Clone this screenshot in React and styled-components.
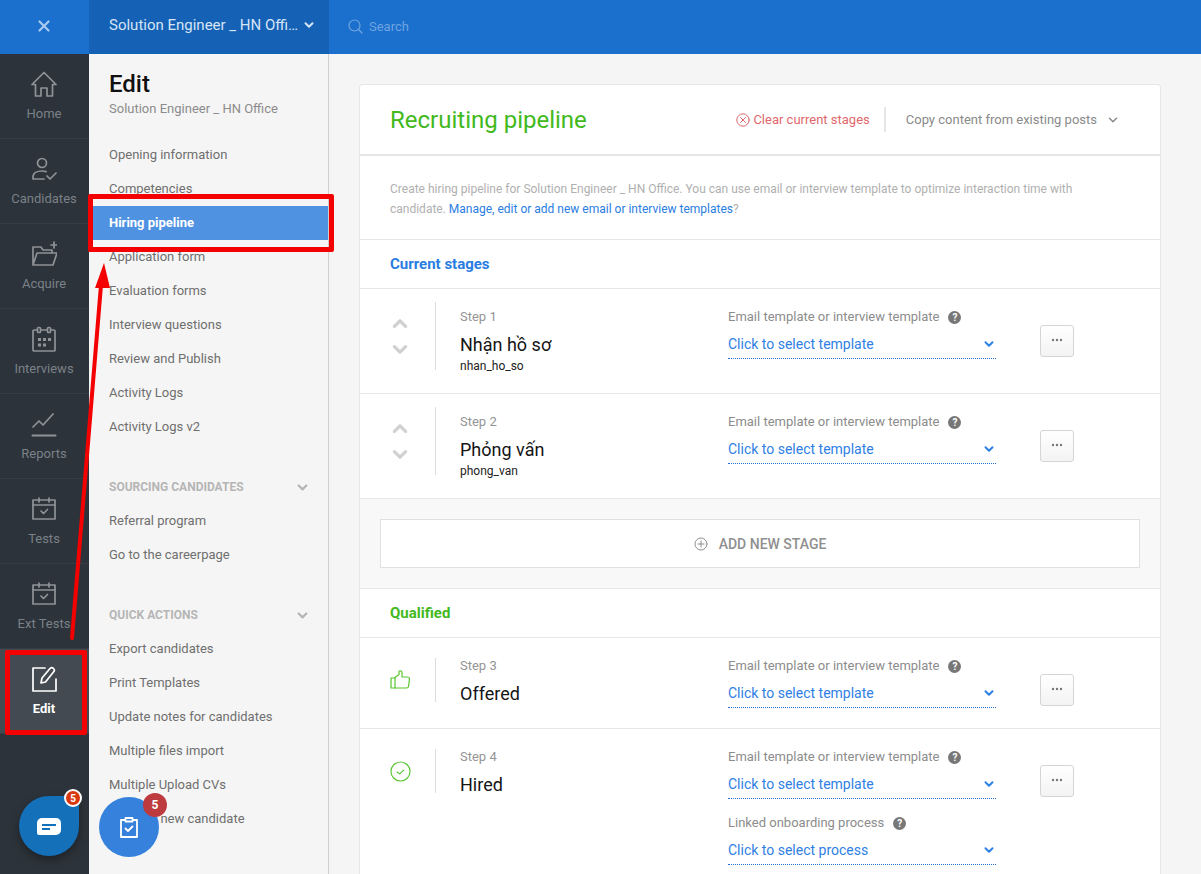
import React from 'react';
import styled, { createGlobalStyle } from 'styled-components';

const GlobalStyle = createGlobalStyle`
  html, body { margin: 0; padding: 0; height: 100%; overflow: hidden; }
  body { font-family: Roboto, "Liberation Sans", sans-serif; background: #f5f5f5; }
  * { box-sizing: border-box; }
`;

const Page = styled.div`
  position: relative;
  width: 1201px;
  height: 874px;
  overflow: hidden;
  display: flex;
  flex-direction: column;
`;

const TopBar = styled.header`
  height: 54px;
  flex: none;
  display: flex;
  background: #1b6fcd;
`;

const CloseBox = styled.div`
  width: 89px;
  padding: 0 1px 2px 0;
  display: flex;
  align-items: center;
  justify-content: center;
  color: #a9cbf0;
`;

const JobPicker = styled.div`
  width: 240px;
  background: #1561b5;
  display: flex;
  align-items: center;
  gap: 5px;
  padding: 0 15px 4px 20px;
  color: #d5e5f7;
  font-size: 15px;
  white-space: nowrap;
`;

const JobName = styled.span`
  flex: 1;
  overflow: hidden;
  text-overflow: ellipsis;
`;

const SearchBox = styled.div`
  display: flex;
  align-items: center;
  gap: 6px;
  padding: 0 0 2px 19px;
  font-size: 13px;
  color: #6fa5e0;
`;

const Body = styled.div`
  flex: 1;
  min-height: 0;
  display: flex;
`;

const Rail = styled.nav`
  width: 89px;
  flex: none;
  background: #2c333a;
`;

const RailItem = styled.div`
  height: 85px;
  padding: 17px 1px 0 0;
  display: flex;
  flex-direction: column;
  align-items: center;
  gap: 9px;
  font-size: 13px;
  line-height: 15px;
  font-weight: ${p => (p.$active ? 700 : 400)};
  color: ${p => (p.$active ? '#fff' : '#7b8188')};
  background: ${p => (p.$active ? '#434a52' : 'transparent')};
  border-bottom: 1px solid #363d44;
  svg { color: ${p => (p.$active ? '#fff' : '#8f9397')}; }
`;

const Sidebar = styled.aside`
  width: 240px;
  flex: none;
  background: #f5f5f5;
  border-right: 1px solid #cfcfcf;
  padding-top: 16px;
`;

const SideTitle = styled.h1`
  margin: 0;
  padding-left: 20px;
  font-size: 24px;
  line-height: 28px;
  font-weight: 500;
  color: #111;
`;

const SideSub = styled.div`
  padding-left: 20px;
  margin: 2px 0 20px;
  font-size: 13px;
  line-height: 18px;
  color: #8c8c8c;
`;

const SideItem = styled.div`
  height: 34px;
  line-height: 34px;
  padding-left: 20px;
  font-size: 13px;
  white-space: nowrap;
  font-weight: ${p => (p.$active ? 700 : 400)};
  color: ${p => (p.$active ? '#fff' : '#6f6f6f')};
  background: ${p => (p.$active ? '#4f92e1' : 'transparent')};
`;

const SideHead = styled.div`
  height: 34px;
  margin-top: ${p => p.$gap}px;
  padding: 0 20px 0 20px;
  display: flex;
  align-items: center;
  justify-content: space-between;
  font-size: 12px;
  font-weight: 700;
  color: #b5b5b5;
`;

const Main = styled.main`
  flex: 1;
  min-width: 0;
  padding: 30px 40px 0 30px;
`;

const Card = styled.section`
  background: #fff;
  border: 1px solid #e6e6e6;
  border-radius: 3px 3px 0 0;
`;

const CardHead = styled.div`
  height: 71px;
  display: flex;
  align-items: center;
  padding: 0 42px 0 30px;
  border-bottom: 2px solid #e6e6e6;
`;

const CardTitle = styled.h2`
  flex: 1;
  margin: 0;
  font-size: 24px;
  font-weight: 400;
  color: #42b91c;
`;

const ClearLink = styled.div`
  display: flex;
  align-items: center;
  gap: 3px;
  padding-right: 14px;
  height: 25px;
  font-size: 13px;
  color: #e0686c;
  border-right: 2px solid #e6e6e6;
`;

const CopyLink = styled.div`
  display: flex;
  align-items: center;
  gap: 11px;
  padding-left: 20px;
  font-size: 13px;
  color: #8a8a8a;
`;

const Intro = styled.p`
  margin: 0;
  height: 84px;
  padding: 23px 30px 0;
  font-size: 12px;
  line-height: 20px;
  color: #b0b0b0;
  border-bottom: 1px solid #e6e6e6;
  a { color: #2a7de1; }
`;

const SectionHead = styled.h3`
  margin: 0;
  height: 49px;
  padding-left: 30px;
  display: flex;
  align-items: center;
  font-size: 15px;
  font-weight: 700;
  color: ${p => p.$color};
  border-bottom: 1px solid #e6e6e6;
`;

const StageRow = styled.div`
  display: flex;
  padding-top: 14px;
  padding-bottom: ${p => p.$bottom}px;
  border-bottom: 1px solid #e6e6e6;
`;

const StageIcon = styled.div`
  width: 76px;
  height: ${p => (p.$code ? '68px' : '44px')};
  margin-top: ${p => (p.$code ? '-1px' : '6px')};
  padding-left: 5px;
  flex: none;
  border-right: 1px solid #dcdcdc;
  display: flex;
  flex-direction: column;
  align-items: center;
  justify-content: center;
  gap: 9px;
  color: ${p => p.$color};
`;

const StageInfo = styled.div`
  width: 292px;
  padding-left: 24px;
  flex: none;
`;

const StepLabel = styled.div`
  font-size: 13px;
  line-height: 18px;
  margin-top: 5px;
  color: #949494;
`;

const StageName = styled.div`
  margin-top: 7px;
  font-size: 18px;
  line-height: 24px;
  color: #151515;
`;

const StageCode = styled.div`
  margin-top: 1px;
  font-size: 12px;
  line-height: 16px;
  color: #222;
`;

const TemplateCol = styled.div`
  width: 268px;
  flex: none;
`;

const FieldLabel = styled.div`
  display: flex;
  align-items: center;
  gap: 9px;
  margin-top: ${p => p.$gap || 5}px;
  font-size: 13px;
  line-height: 18px;
  color: #8c8c8c;
`;

const HelpDot = styled.span`
  width: 13px;
  height: 13px;
  border-radius: 50%;
  background: #777;
  color: #fff;
  font-size: 10px;
  font-weight: 700;
  line-height: 13px;
  text-align: center;
`;

const SelectLine = styled.div`
  height: 30px;
  margin-top: 3px;
  display: flex;
  align-items: center;
  justify-content: space-between;
  padding-right: 2px;
  font-size: 14px;
  color: #2f80e4;
  border-bottom: 1px dotted #2270d0;
`;

const DotsButton = styled.div`
  width: 34px;
  height: 32px;
  margin: 22px 0 0 44px;
  border: 1px solid #d5d5d5;
  border-radius: 3px;
  background: linear-gradient(#fff, #f3f3f3);
  display: flex;
  align-items: center;
  justify-content: center;
  padding-bottom: 3px;
  color: #777;
`;

const AddArea = styled.div`
  height: 90px;
  padding: 20px;
  background: #f8f8f8;
  border-bottom: 1px solid #e6e6e6;
`;

const AddButton = styled.div`
  height: 49px;
  background: #fff;
  border: 1px solid #e0e0e0;
  display: flex;
  align-items: center;
  justify-content: center;
  gap: 11px;
  font-size: 14px;
  font-weight: 500;
  color: #8f8f8f;
  svg { color: #8f8f8f; }
`;

const ChatFab = styled.div`
  position: absolute;
  left: 19px;
  top: 796px;
  width: 60px;
  height: 60px;
  border-radius: 50% 0 50% 50%;
  background: #1470b8;
  box-shadow: 0 4px 10px rgba(0, 0, 0, 0.35);
  display: flex;
  align-items: center;
  justify-content: center;
`;

const TaskFab = styled.div`
  position: absolute;
  left: 99px;
  top: 797px;
  width: 60px;
  height: 60px;
  border-radius: 50%;
  background: #3681dc;
  display: flex;
  align-items: center;
  justify-content: center;
`;

const ChatBadge = styled.span`
  position: absolute;
  left: 45px;
  top: -7px;
  width: 18px;
  height: 18px;
  display: flex;
  align-items: center;
  justify-content: center;
  border-radius: 50%;
  border: 2px solid #fff;
  background: #d9380f;
  color: #fff;
  font-size: 10px;
  font-weight: 700;
`;

const TaskBadge = styled.span`
  position: absolute;
  left: 44px;
  top: -4px;
  width: 24px;
  height: 24px;
  display: flex;
  align-items: center;
  justify-content: center;
  border-radius: 50%;
  background: #bd3a3e;
  color: #fff;
  font-size: 12px;
  font-weight: 700;
`;

const MarkBox = styled.div`
  position: absolute;
  border: 5px solid #f40000;
  border-radius: 2px;
  left: ${p => p.$x}px;
  top: ${p => p.$y}px;
  width: ${p => p.$w}px;
  height: ${p => p.$h}px;
`;

const ArrowLayer = styled.svg`
  position: absolute;
  left: 0;
  top: 0;
  width: 1201px;
  height: 874px;
  pointer-events: none;
`;

const Line = ({ size = 24, children, sw = 1.6, vb = 24 }) => (
  <svg width={size} height={size} viewBox={`0 0 ${vb} ${vb}`} fill="none" stroke="currentColor" strokeWidth={sw} strokeLinecap="round" strokeLinejoin="round">
    {children}
  </svg>
);

const Chevron = ({ size = 10, sw = 2 }) => (
  <Line size={size} vb={10} sw={sw}><path d="M1.5 3.2 5 6.7l3.5-3.5" /></Line>
);

const railIcons = {
  home: <path d="M1 13.500 13 1.500l12 12h-3.500V25H16v-8h-6v8H4.500V13.500H1z" />,
  candidates: (
    <>
      <circle cx="11" cy="7" r="4.500" />
      <path d="M2 23v-2c0-4 4-6 9-6 1.500 0 3 .2 4 .6M2 23h11M16 20l3 3 6-6" />
    </>
  ),
  acquire: (
    <>
      <path d="M2 24V6h8l2 3h9v3M2 24l4-12h20l-4 12H2z" />
      <path d="M23 1v6M20 4h6" />
    </>
  ),
  interviews: (
    <>
      <rect x="2" y="4" width="22" height="21" rx="1" />
      <rect x="6.500" y="1.500" width="3" height="5" rx="1" fill="#2c333a" />
      <rect x="16.500" y="1.500" width="3" height="5" rx="1" fill="#2c333a" />
      <path d="M7 12h3v3H7zM12 12h3v3h-3zM17 12h3v3h-3zM7 17.500h3v3H7zM12 17.500h3v3h-3z" fill="currentColor" stroke="none" />
    </>
  ),
  reports: (
    <>
      <path d="M2 16l6-6 4 4 10-11" />
      <path d="M1.500 24.500h23" strokeWidth="2" />
    </>
  ),
  tests: (
    <>
      <rect x="2" y="4" width="22" height="19" />
      <path d="M2 9h22M8 2v4M18 2v4M10 15l2.500 2.500 4-4" />
    </>
  ),
  edit: (
    <>
      <path d="M14 2H2v23h23V13" />
      <path d="M10 17l1-5L19 2.500a2 2 0 0 1 3.500 3.500L14.500 16l-4.500 1z" />
    </>
  ),
};

const railItems = [
  { label: 'Home', icon: 'home' },
  { label: 'Candidates', icon: 'candidates' },
  { label: 'Acquire', icon: 'acquire' },
  { label: 'Interviews', icon: 'interviews' },
  { label: 'Reports', icon: 'reports' },
  { label: 'Tests', icon: 'tests' },
  { label: 'Ext Tests', icon: 'tests' },
  { label: 'Edit', icon: 'edit', active: true },
];

const Stage = ({ step, name, code, icon, iconColor = '#57c52f', bottom = 20, children }) => (
  <StageRow $bottom={bottom}>
    <StageIcon $code={!!code} $color={iconColor}>{icon}</StageIcon>
    <StageInfo>
      <StepLabel>{step}</StepLabel>
      <StageName>{name}</StageName>
      {code && <StageCode>{code}</StageCode>}
    </StageInfo>
    <TemplateCol>
      <FieldLabel>Email template or interview template <HelpDot>?</HelpDot></FieldLabel>
      <SelectLine>Click to select template <Chevron /></SelectLine>
      {children}
    </TemplateCol>
    <DotsButton>
      <svg width="12" height="4" viewBox="0 0 12 4" fill="currentColor">
        <circle cx="2" cy="2" r="1.200" />
        <circle cx="6" cy="2" r="1.200" />
        <circle cx="10" cy="2" r="1.200" />
      </svg>
    </DotsButton>
  </StageRow>
);

const MoveArrows = (
  <>
    <Line size={16} sw={2} vb={10}><path d="M1.500 6.500 5 3l3.500 3.500" /></Line>
    <Line size={16} sw={2} vb={10}><path d="M1.500 3.500 5 7l3.500-3.500" /></Line>
  </>
);

const ThumbIcon = (
  <Line size={20} vb={20} sw={1.2}>
    <path d="M5 8H1v10h4" />
    <path d="M5 7.500l4-3V1.800c0-1.300 3-1.300 3 .6V7h5.500c1.500 0 2 1 2 2l-1 7.500c-.2 1-1 1.500-2 1.500H5V7.500z" />
  </Line>
);

const CheckIcon = (
  <Line size={21} vb={22} sw={1.2}>
    <circle cx="11" cy="11" r="10" />
    <path d="M7.500 11.500 10 13.500l4.500-4" />
  </Line>
);

export default function App() {
  return (
    <Page>
      <GlobalStyle />
      <TopBar>
        <CloseBox>
          <Line size={14} sw={2.2} vb={14}><path d="M2.500 2.500l9 9M11.500 2.500l-9 9" /></Line>
        </CloseBox>
        <JobPicker>
          <JobName>Solution Engineer _ HN Office</JobName>
          <Chevron />
        </JobPicker>
        <SearchBox>
          <Line size={15} sw={1.2} vb={15}><circle cx="6.500" cy="6.500" r="5.500" /><path d="M10.500 10.500 14 14" /></Line>
          Search
        </SearchBox>
      </TopBar>
      <Body>
        <Rail>
          {railItems.map(it => (
            <RailItem key={it.label} $active={it.active}>
              <Line size={26} vb={26} sw={1.7}>{railIcons[it.icon]}</Line>
              {it.label}
            </RailItem>
          ))}
        </Rail>
        <Sidebar>
          <SideTitle>Edit</SideTitle>
          <SideSub>Solution Engineer _ HN Office</SideSub>
          <SideItem>Opening information</SideItem>
          <SideItem>Competencies</SideItem>
          <SideItem $active>Hiring pipeline</SideItem>
          <SideItem>Application form</SideItem>
          <SideItem>Evaluation forms</SideItem>
          <SideItem>Interview questions</SideItem>
          <SideItem>Review and Publish</SideItem>
          <SideItem>Activity Logs</SideItem>
          <SideItem>Activity Logs v2</SideItem>
          <SideHead $gap={26}>SOURCING CANDIDATES <Chevron size={11} /></SideHead>
          <SideItem>Referral program</SideItem>
          <SideItem>Go to the careerpage</SideItem>
          <SideHead $gap={26}>QUICK ACTIONS <Chevron size={11} /></SideHead>
          <SideItem>Export candidates</SideItem>
          <SideItem>Print Templates</SideItem>
          <SideItem>Update notes for candidates</SideItem>
          <SideItem>Multiple files import</SideItem>
          <SideItem>Multiple Upload CVs</SideItem>
          <SideItem>Create a new candidate</SideItem>
        </Sidebar>
        <Main>
          <Card>
            <CardHead>
              <CardTitle>Recruiting pipeline</CardTitle>
              <ClearLink>
                <Line size={14} vb={14} sw={1}><circle cx="7" cy="7" r="6.200" /><path d="M4.500 4.500l5 5M9.500 4.500l-5 5" /></Line>
                Clear current stages
              </ClearLink>
              <CopyLink>Copy content from existing posts <Chevron sw={1.5} /></CopyLink>
            </CardHead>
            <Intro>
              Create hiring pipeline for Solution Engineer _ HN Office. You can use email or interview template to optimize interaction time with candidate. <a>Manage, edit or add new email or interview templates</a>?
            </Intro>
            <SectionHead $color="#2a7de1">Current stages</SectionHead>
            <Stage step="Step 1" name="Nhận hồ sơ" code="nhan_ho_so" icon={MoveArrows} iconColor="#d0d0d0" bottom={19} />
            <Stage step="Step 2" name="Phỏng vấn" code="phong_van" icon={MoveArrows} iconColor="#d0d0d0" bottom={19} />
            <AddArea>
              <AddButton>
                <Line size={14} vb={14} sw={1}><circle cx="7" cy="7" r="6" /><path d="M7 4v6M4 7h6" /></Line>
                ADD NEW STAGE
              </AddButton>
            </AddArea>
            <SectionHead $color="#42b91c">Qualified</SectionHead>
            <Stage step="Step 3" name="Offered" icon={ThumbIcon} />
            <Stage step="Step 4" name="Hired" bottom={22} icon={CheckIcon}>
              <FieldLabel $gap={15}>Linked onboarding process <HelpDot>?</HelpDot></FieldLabel>
              <SelectLine>Click to select process <Chevron /></SelectLine>
            </Stage>
          </Card>
        </Main>
      </Body>

      <TaskFab>
        <svg width="20" height="22" viewBox="0 0 20 22" fill="none" stroke="#fff" strokeWidth="1.800" strokeLinejoin="round" strokeLinecap="round">
          <path d="M6 4H2v17h16V4h-4" />
          <path d="M6.500 2h7v3.500h-7z" />
          <path d="M6.500 12.500l2.500 2.500 4.500-4.500" />
        </svg>
        <TaskBadge>5</TaskBadge>
      </TaskFab>
      <ChatFab>
        <svg width="24" height="17" viewBox="0 0 24 17">
          <path d="M5 0h14a5 5 0 0 1 5 5v7a5 5 0 0 1-5 5H2a2 2 0 0 1-2-2V5a5 5 0 0 1 5-5z" fill="#fff" />
          <path d="M5 6h14v2H5zM5 10h8v2H5z" fill="#1470b8" />
        </svg>
        <ChatBadge>5</ChatBadge>
      </ChatFab>

      <MarkBox $x={88} $y={194} $w={246} $h={58} />
      <MarkBox $x={5} $y={650} $w={82} $h={85} />
      <ArrowLayer viewBox="0 0 1201 874">
        <path d="M72 638 101 285" stroke="#f40000" strokeWidth="4" strokeLinecap="round" />
        <path d="M104 263 95 288h15z" fill="#f40000" />
      </ArrowLayer>
    </Page>
  );
}
